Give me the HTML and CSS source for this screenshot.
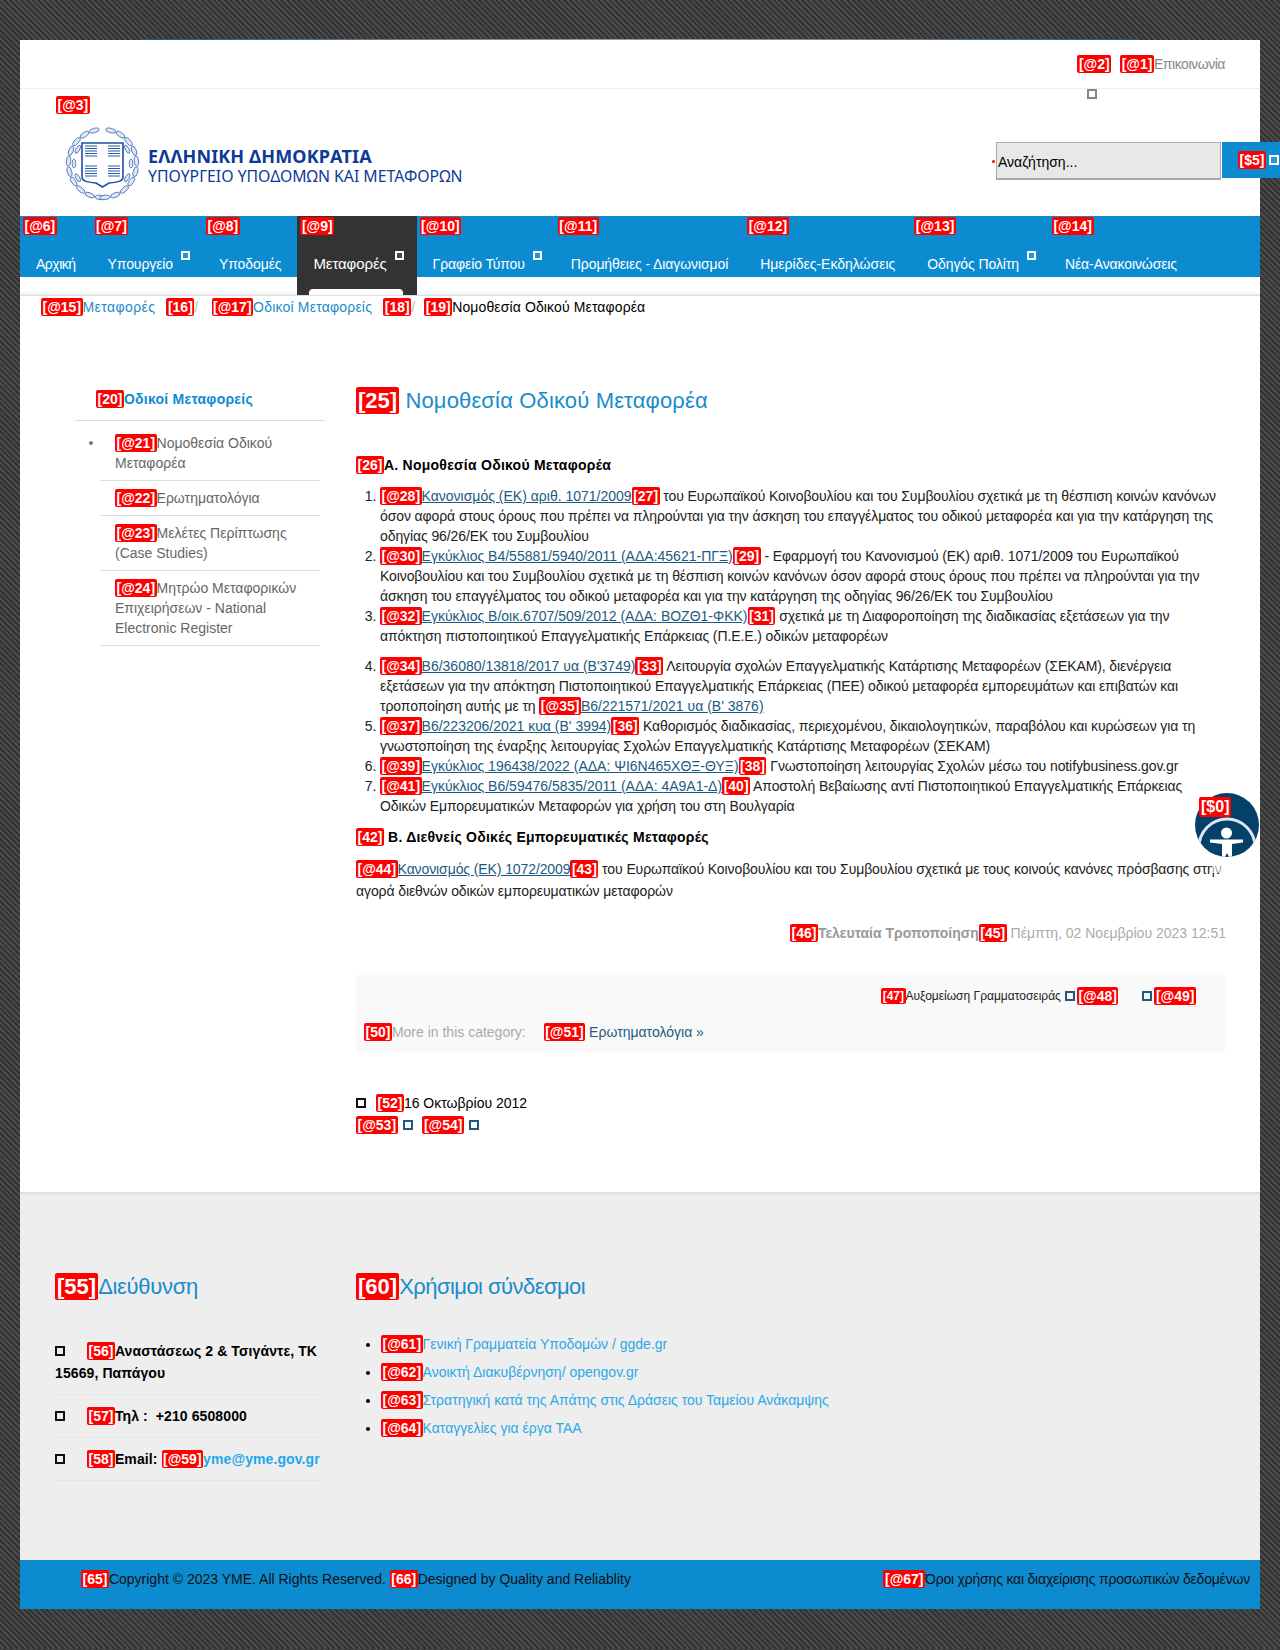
FILE: index.html
```html
<!DOCTYPE html>
<html lang="el">
<head>
    <meta charset="UTF-8">
    <title>Νομοθεσία Οδικού Μεταφορέα</title>
    <link rel="stylesheet" href="styles.css">
</head>
<body>
<div class="page">
    <!-- Top bar -->
    <div class="topbar">
        <b class="tag">[@2]</b>
        <span class="top-contact"><b class="tag">[@1]</b>Επικοινωνία</span>
    </div>

    <!-- Logo and search -->
    <div class="header">
        <i class="box box-gray header-box"></i>
        <div class="brand">
            <b class="tag brand-tag">[@3]</b>
            <div class="brand-row">
                <svg class="crest" viewBox="0 0 75 75">
                    <g fill="#dfe7f5" stroke="#2a5ba8" stroke-width="0.7">
                        <ellipse cx="37.500" cy="3.500" rx="5" ry="2.200" transform="rotate(-14 37.500 37.500)"/>
                        <ellipse cx="37.500" cy="3.500" rx="5" ry="2.200" transform="rotate(-32 37.500 37.500)"/>
                        <ellipse cx="37.500" cy="3.500" rx="5" ry="2.200" transform="rotate(-50 37.500 37.500)"/>
                        <ellipse cx="37.500" cy="3.500" rx="5" ry="2.200" transform="rotate(-68 37.500 37.500)"/>
                        <ellipse cx="37.500" cy="3.500" rx="5" ry="2.200" transform="rotate(-86 37.500 37.500)"/>
                        <ellipse cx="37.500" cy="3.500" rx="5" ry="2.200" transform="rotate(-104 37.500 37.500)"/>
                        <ellipse cx="37.500" cy="3.500" rx="5" ry="2.200" transform="rotate(-122 37.500 37.500)"/>
                        <ellipse cx="37.500" cy="3.500" rx="5" ry="2.200" transform="rotate(-140 37.500 37.500)"/>
                        <ellipse cx="37.500" cy="3.500" rx="5" ry="2.200" transform="rotate(-158 37.500 37.500)"/>
                        <ellipse cx="37.500" cy="3.500" rx="5" ry="2.200" transform="rotate(-176 37.500 37.500)"/>
                        <ellipse cx="37.500" cy="3.500" rx="5" ry="2.200" transform="rotate(14 37.500 37.500)"/>
                        <ellipse cx="37.500" cy="3.500" rx="5" ry="2.200" transform="rotate(32 37.500 37.500)"/>
                        <ellipse cx="37.500" cy="3.500" rx="5" ry="2.200" transform="rotate(50 37.500 37.500)"/>
                        <ellipse cx="37.500" cy="3.500" rx="5" ry="2.200" transform="rotate(68 37.500 37.500)"/>
                        <ellipse cx="37.500" cy="3.500" rx="5" ry="2.200" transform="rotate(86 37.500 37.500)"/>
                        <ellipse cx="37.500" cy="3.500" rx="5" ry="2.200" transform="rotate(104 37.500 37.500)"/>
                        <ellipse cx="37.500" cy="3.500" rx="5" ry="2.200" transform="rotate(122 37.500 37.500)"/>
                        <ellipse cx="37.500" cy="3.500" rx="5" ry="2.200" transform="rotate(140 37.500 37.500)"/>
                        <ellipse cx="37.500" cy="3.500" rx="5" ry="2.200" transform="rotate(158 37.500 37.500)"/>
                        <ellipse cx="37.500" cy="3.500" rx="5" ry="2.200" transform="rotate(176 37.500 37.500)"/>
                        <ellipse cx="37.500" cy="9" rx="4.500" ry="1.800" transform="rotate(-60 37.500 37.500)"/>
                        <ellipse cx="37.500" cy="9" rx="4.500" ry="1.800" transform="rotate(-90 37.500 37.500)"/>
                        <ellipse cx="37.500" cy="9" rx="4.500" ry="1.800" transform="rotate(-120 37.500 37.500)"/>
                        <ellipse cx="37.500" cy="9" rx="4.500" ry="1.800" transform="rotate(60 37.500 37.500)"/>
                        <ellipse cx="37.500" cy="9" rx="4.500" ry="1.800" transform="rotate(90 37.500 37.500)"/>
                        <ellipse cx="37.500" cy="9" rx="4.500" ry="1.800" transform="rotate(120 37.500 37.500)"/>
                    </g>
                    <path d="M17 17H58V51C58 55 54 56 44 57L37.500 61L31 57C21 56 17 55 17 51Z" fill="#fff" stroke="#1f4fa3" stroke-width="1.600"/>
                    <g stroke="#2a5ba8" stroke-width="1.200">
                        <path d="M20 20H32M20 22.500H32M20 25H32M20 27.500H32M20 30H32"/>
                        <path d="M43 20H55M43 22.500H55M43 25H55M43 27.500H55M43 30H55"/>
                        <path d="M20 40H32M20 42.500H32M20 45H32M20 47.500H32M20 50H32"/>
                        <path d="M43 40H55M43 42.500H55M43 45H55M43 47.500H55M43 50H55"/>
                    </g>
                </svg>
                <div class="brand-text">
                    <div class="brand-top">ΕΛΛΗΝΙΚΗ ΔΗΜΟΚΡΑΤΙΑ</div>
                    <div class="brand-sub">ΥΠΟΥΡΓΕΙΟ ΥΠΟΔΟΜΩΝ ΚΑΙ ΜΕΤΑΦΟΡΩΝ</div>
                </div>
            </div>
        </div>
        <form class="search">
            <span class="search-dot"></span>
            <div class="search-input">Αναζήτηση...</div>
            <div class="search-btn"><b class="tag">[$5]</b><i class="box box-white"></i></div>
        </form>
    </div>

    <!-- Main menu -->
    <ul class="nav">
        <li class="nav-home"><b class="tag">[@6]</b>Αρχική</li>
        <li><b class="tag">[@7]</b>Υπουργείο<i class="box box-white"></i></li>
        <li><b class="tag">[@8]</b>Υποδομές</li>
        <li class="active"><b class="tag">[@9]</b>Μεταφορές<i class="box box-white"></i></li>
        <li><b class="tag">[@10]</b>Γραφείο Τύπου<i class="box box-white"></i></li>
        <li><b class="tag">[@11]</b>Προμήθειες - Διαγωνισμοί</li>
        <li class="nav-wide"><b class="tag">[@12]</b>Ημερίδες-Εκδηλώσεις</li>
        <li><b class="tag">[@13]</b>Οδηγός Πολίτη<i class="box box-white"></i></li>
        <li><b class="tag">[@14]</b>Νέα-Ανακοινώσεις</li>
    </ul>

    <!-- Breadcrumb -->
    <div class="crumbs">
        <b class="tag">[@15]</b><a class="crumb-first">Μεταφορές</a>
        <b class="tag crumb-near">[16]</b><span class="slash">/</span>
        <b class="tag crumb-gap">[@17]</b><a>Οδικοί Μεταφορείς</a>
        <b class="tag crumb-near">[18]</b><span class="slash">/</span>
        <b class="tag crumb-last">[19]</b><span class="crumb-current">Νομοθεσία Οδικού Μεταφορέα</span>
    </div>

    <div class="content">
        <!-- Side menu -->
        <div class="sidebar">
            <div class="side-title"><b class="tag">[20]</b>Οδικοί Μεταφορείς</div>
            <ul class="side-list">
                <li class="side-current"><b class="tag">[@21]</b>Νομοθεσία Οδικού Μεταφορέα</li>
                <li><b class="tag">[@22]</b>Ερωτηματολόγια</li>
                <li><b class="tag">[@23]</b>Μελέτες Περίπτωσης (Case Studies)</li>
                <li><b class="tag">[@24]</b>Μητρώο Μεταφορικών Επιχειρήσεων - National Electronic Register</li>
            </ul>
        </div>

        <!-- Article -->
        <div class="article">
            <h1><b class="tag">[25]</b> Νομοθεσία Οδικού Μεταφορέα</h1>
            <h3 class="sec-a"><b class="tag">[26]</b>Α. Νομοθεσία Οδικού Μεταφορέα</h3>
            <ol class="laws">
                <li><b class="tag">[@28]</b><a>Κανονισμός (ΕΚ) αριθ. 1071/2009</a><b class="tag">[27]</b> του Ευρωπαϊκού Κοινοβουλίου και του Συμβουλίου σχετικά με τη θέσπιση κοινών κανόνων όσον αφορά στους όρους που πρέπει να πληρούνται για την άσκηση του επαγγέλματος του οδικού μεταφορέα και για την κατάργηση της οδηγίας 96/26/ΕΚ του Συμβουλίου</li>
                <li><b class="tag">[@30]</b><a>Εγκύκλιος Β4/55881/5940/2011 (ΑΔΑ:45621-ΠΓΞ)</a><b class="tag">[29]</b> - Εφαρμογή του Κανονισμού (ΕΚ) αριθ. 1071/2009 του Ευρωπαϊκού Κοινοβουλίου και του Συμβουλίου σχετικά με τη θέσπιση κοινών κανόνων όσον αφορά στους όρους που πρέπει να πληρούνται για την άσκηση του επαγγέλματος του οδικού μεταφορέα και για την κατάργηση της οδηγίας 96/26/ΕΚ του Συμβουλίου</li>
                <li class="law-gap"><b class="tag">[@32]</b><a>Εγκύκλιος Β/οικ.6707/509/2012 (ΑΔΑ: ΒΟΖΘ1-ΦΚΚ)</a><b class="tag">[31]</b> σχετικά με τη Διαφοροποίηση της διαδικασίας εξετάσεων για την απόκτηση πιστοποιητικού Επαγγελματικής Επάρκειας (Π.Ε.Ε.) οδικών μεταφορέων</li>
                <li><b class="tag">[@34]</b><a>Β6/36080/13818/2017 υα (Β'3749)</a><b class="tag">[33]</b> Λειτουργία σχολών Επαγγελματικής Κατάρτισης Μεταφορέων (ΣΕΚΑΜ), διενέργεια εξετάσεων για την απόκτηση Πιστοποιητικού Επαγγελματικής Επάρκειας (ΠΕΕ) οδικού μεταφορέα εμπορευμάτων και επιβατών και τροποποίηση αυτής με τη <b class="tag">[@35]</b><a>Β6/221571/2021 υα (Β' 3876)</a></li>
                <li><b class="tag">[@37]</b><a>Β6/223206/2021 κυα (Β' 3994)</a><b class="tag">[36]</b> Καθορισμός διαδικασίας, περιεχομένου, δικαιολογητικών, παραβόλου και κυρώσεων για τη γνωστοποίηση της έναρξης λειτουργίας Σχολών Επαγγελματικής Κατάρτισης Μεταφορέων (ΣΕΚΑΜ)</li>
                <li><b class="tag">[@39]</b><a>Εγκύκλιος 196438/2022 (ΑΔΑ: ΨΙ6Ν465ΧΘΞ-ΘΥΞ)</a><b class="tag">[38]</b> Γνωστοποίηση λειτουργίας Σχολών μέσω του notifybusiness.gov.gr</li>
                <li><b class="tag">[@41]</b><a>Εγκύκλιος Β6/59476/5835/2011 (ΑΔΑ: 4Α9Α1-Δ)</a><b class="tag">[40]</b> Αποστολή Βεβαίωσης αντί Πιστοποιητικού Επαγγελματικής Επάρκειας Οδικών Εμπορευματικών Μεταφορών για χρήση του στη Βουλγαρία</li>
            </ol>
            <h3 class="sec-b"><b class="tag">[42]</b> Β. Διεθνείς Οδικές Εμπορευματικές Μεταφορές</h3>
            <p class="intl"><b class="tag">[@44]</b><a>Κανονισμός (ΕΚ) 1072/2009</a><b class="tag">[43]</b> του Ευρωπαϊκού Κοινοβουλίου και του Συμβουλίου σχετικά με τους κοινούς κανόνες πρόσβασης στην αγορά διεθνών οδικών εμπορευματικών μεταφορών</p>
            <div class="modified"><b class="tag">[46]</b><strong>Τελευταία Τροποποίηση</strong><b class="tag">[45]</b> Πέμπτη, 02 Νοεμβρίου 2023 12:51</div>

            <div class="tools">
                <div class="font-row">
                    <b class="tag small-tag">[47]</b><span>Αυξομείωση Γραμματοσειράς</span>
                    <i class="box box-link font-box"></i><b class="tag">[@48]</b>
                    <i class="box box-link font-box font-box-2"></i><b class="tag">[@49]</b>
                </div>
                <div class="more-row">
                    <b class="tag">[50]</b><span class="more-label">More in this category:</span>
                    <b class="tag more-link-tag">[@51]</b> <a>Ερωτηματολόγια »</a>
                </div>
            </div>

            <div class="date-row"><i class="box box-black"></i><b class="tag">[52]</b>16 Οκτωβρίου 2012</div>
            <div class="share-row">
                <b class="tag">[@53]</b><i class="box box-link"></i>
                <b class="tag share-two">[@54]</b><i class="box box-link"></i>
            </div>
        </div>
    </div>

    <!-- Footer -->
    <div class="footer">
        <div class="foot-address">
            <h2><b class="tag">[55]</b>Διεύθυνση</h2>
            <ul class="address-list">
                <li><i class="box box-black"></i><b class="tag">[56]</b>Αναστάσεως 2 &amp; Τσιγάντε, ΤΚ 15669, Παπάγου</li>
                <li><i class="box box-black"></i><b class="tag">[57]</b>Τηλ :&nbsp; +210 6508000</li>
                <li><i class="box box-black"></i><b class="tag">[58]</b>Email: <b class="tag">[@59]</b><a>yme@yme.gov.gr</a></li>
            </ul>
        </div>
        <div class="foot-links">
            <h2><b class="tag">[60]</b>Χρήσιμοι σύνδεσμοι</h2>
            <ul class="link-list">
                <li><b class="tag">[@61]</b><a>Γενική Γραμματεία Υποδομών / ggde.gr</a></li>
                <li><b class="tag">[@62]</b><a>Ανοικτή Διακυβέρνηση/ opengov.gr</a></li>
                <li><b class="tag">[@63]</b><a>Στρατηγική κατά της Απάτης στις Δράσεις του Ταμείου Ανάκαμψης</a></li>
                <li><b class="tag">[@64]</b><a>Καταγγελίες για έργα ΤΑΑ</a></li>
            </ul>
        </div>
    </div>

    <div class="bottom">
        <div><b class="tag">[65]</b>Copyright © 2023 YME. All Rights Reserved. <b class="tag">[66]</b>Designed by Quality and Reliablity</div>
        <div class="bottom-right"><b class="tag">[@67]</b>Όροι χρήσης και διαχείρισης προσωπικών δεδομένων</div>
    </div>

    <!-- Accessibility widget -->
    <div class="a11y">
        <svg viewBox="0 0 64 64" width="64" height="64">
            <defs><clipPath id="disc"><circle cx="32" cy="32" r="32"/></clipPath></defs>
            <circle cx="32" cy="32" r="32" fill="#03416b"/>
            <g clip-path="url(#disc)" fill="#fff">
                <path d="M4 54A28 28 0 0 1 60 54" fill="none" stroke="#dfe7ee" stroke-width="3"/>
                <circle cx="31.500" cy="40" r="5.500"/>
                <path d="M15 46.500H48V49.500L37 51V64H34L32 60L30 64H27V51L15 49.500Z"/>
            </g>
        </svg>
        <b class="tag a11y-tag">[$0]</b>
    </div>
</div>
</body>
</html>
```

FILE: styles.css
```css
html, body {
    overflow-x: hidden;
}

body {
    margin: 0;
    font-family: "Liberation Sans", Arial, sans-serif;
    font-size: 14px;
    line-height: 20px;
    color: #222;
    background: repeating-linear-gradient(45deg, #333 0, #333 2px, #4a4a4a 2px, #4a4a4a 4px);
}

ul, ol, h1, h2, h3, p {
    margin: 0;
    padding: 0;
}

a {
    color: inherit;
}

.page {
    position: relative;
    width: 1240px;
    margin: 40px 20px;
    background: #fff;
}

.page::before {
    content: "";
    position: absolute;
    top: -1px;
    left: 120px;
    width: 1000px;
    height: 1px;
    background: linear-gradient(90deg, #1b5a8f, #999 45%, #999 55%, #1b5a8f);
}

.tag {
    padding: 1px 1.5px;
    border-radius: 2px;
    background: #f00;
    color: #fff;
    font-family: "Liberation Sans", Arial, sans-serif;
    font-weight: bold;
    font-size: 14px;
    letter-spacing: 0;
}

.box {
    display: inline-block;
    box-sizing: border-box;
    width: 10px;
    height: 10px;
    border: 2px solid #000;
}

.box-gray { border-color: #888; }
.box-white { border-color: #fff; background: rgba(255, 255, 255, 0.1); }
.box-black { border-color: #111; }
.box-link { border-color: #1c5a80; }

/* top bar */
.topbar {
    display: flex;
    justify-content: flex-end;
    align-items: flex-start;
    gap: 9px;
    box-sizing: border-box;
    height: 49px;
    padding: 14px 35px 0 0;
    border-bottom: 1px solid #eee;
}

.topbar > .tag {
    margin-top: 1px;
    line-height: 16px;
}

.top-contact {
    color: #888;
    letter-spacing: -0.45px;
}

/* header */
.header {
    position: relative;
    display: flex;
    justify-content: space-between;
    height: 127px;
}

.header-box {
    position: absolute;
    top: 0;
    left: 1067px;
}

.brand {
    padding: 6px 0 0 36px;
}

.brand-row {
    display: flex;
    align-items: center;
    gap: 8px;
    margin: 11px 0 0 9px;
}

.crest {
    width: 75px;
    height: 75px;
}

.brand-text {
    margin-top: 4px;
    font-family: "Noto Sans", sans-serif;
    color: #0d3a95;
    line-height: 20px;
}

.brand-top {
    font-weight: bold;
    font-size: 18px;
    letter-spacing: 0.15px;
}

.brand-sub {
    font-size: 15.8px;
}

.search {
    display: flex;
    align-items: flex-start;
    margin: 53px -20px 0 0;
    position: relative;
}

.search-dot {
    width: 3px;
    height: 3px;
    margin: 18px 1px 0 0;
    border-radius: 50%;
    background: #f00;
}

.search-input {
    box-sizing: border-box;
    width: 225px;
    height: 38px;
    padding: 9px 0 0 1px;
    border: 1px solid #aaa;
    border-bottom-width: 2px;
    background: #e8e8e8;
    color: #000;
    font-size: 14px;
}

.search-btn {
    display: flex;
    align-items: center;
    gap: 3px;
    box-sizing: border-box;
    width: 58px;
    height: 36px;
    margin-left: 1px;
    padding-left: 16px;
    background: #0d8bd0;
}

.search-btn .tag {
    line-height: 16px;
}

/* main menu */
.nav {
    display: flex;
    height: 61px;
    margin-bottom: 18px;
    list-style: none;
    background: #0d8bd0;
    color: #fff;
}

.nav li {
    position: relative;
    box-sizing: border-box;
    height: 61px;
    padding: 38px 16px 0;
    font-size: 14px;
    letter-spacing: -0.1px;
    white-space: nowrap;
}

.nav .nav-home {
    letter-spacing: -0.5px;
}

.nav .nav-wide {
    letter-spacing: 0;
}

.nav .tag {
    position: absolute;
    top: 1px;
    left: 3px;
    line-height: 16px;
}

.nav .box {
    width: 9px;
    height: 9px;
    margin: -3px -3px 0 8px;
    vertical-align: top;
}

.nav .active {
    height: 79px;
    font-size: 15px;
    background: #333;
}

.nav .active::after {
    content: "";
    position: absolute;
    left: 12px;
    bottom: 0;
    width: 94px;
    height: 6px;
    border-radius: 4px 4px 0 0;
    background: #fff;
}

/* breadcrumb */
.crumbs {
    height: 24px;
    padding: 1px 0 0 21px;
    border-top: 1px solid #ddd;
    box-shadow: 0 -2px 2px rgba(0, 0, 0, 0.06);
    color: #000;
    letter-spacing: 0.2px;
}

.crumbs a {
    color: #1a8ccc;
}

.crumbs .crumb-first {
    letter-spacing: 0.4px;
}

.crumb-gap {
    margin-left: 9px;
}

.crumb-near {
    margin-left: 7px;
}

.crumb-last {
    margin-left: 5px;
}

.crumb-current {
    letter-spacing: 0.12px;
}

.slash {
    color: #bbb;
}

/* two columns */
.content {
    display: flex;
    gap: 31px;
    padding: 0 34px 57px 55px;
}

.sidebar {
    width: 250px;
    flex-shrink: 0;
    margin-top: 68px;
    color: #666;
}

.side-title {
    height: 31px;
    padding-left: 21px;
    border-bottom: 1px solid #ddd;
    color: #0d8bd0;
    font-weight: bold;
    letter-spacing: 0.25px;
}

.side-list {
    margin-left: 25px;
    width: 220px;
    list-style: none;
}

.side-list li {
    padding: 7px 0 7px 15px;
    border-bottom: 1px solid #ddd;
}

.side-list .side-current {
    position: relative;
    padding-top: 12px;
}

.side-current::before {
    content: "";
    position: absolute;
    left: -11px;
    top: 20px;
    width: 4px;
    height: 4px;
    border-radius: 50%;
    background: #777;
}

.article {
    width: 870px;
}

.article h1 {
    margin-top: 66px;
    color: #1a8ccc;
    font-size: 22px;
    line-height: 28px;
    font-weight: normal;
    letter-spacing: 0.15px;
}

.article h1 .tag,
.footer h2 .tag {
    padding: 1px 2px;
    font-size: 22px;
}

.sec-a {
    margin-top: 40px;
    color: #000;
    font-size: 14px;
    line-height: 20px;
    letter-spacing: 0.25px;
}

.laws {
    margin-top: 11px;
    padding-left: 24px;
    letter-spacing: -0.1px;
}

.laws a,
.intl a {
    color: #1c5a80;
    text-decoration: underline;
}

.laws a {
    letter-spacing: 0;
}

.law-gap {
    margin-bottom: 10px;
}

.sec-b {
    margin-top: 11px;
    color: #000;
    font-size: 14px;
    line-height: 20px;
    letter-spacing: 0.25px;
}

.intl {
    margin-top: 11px;
    line-height: 22px;
    letter-spacing: -0.1px;
}

.modified {
    margin-top: 21px;
    text-align: right;
    color: #aaa;
}

.modified strong {
    color: #999;
}

.tools {
    margin-top: 32px;
    height: 77px;
    border-radius: 4px;
    background: #f9f9f9;
}

.font-row {
    display: flex;
    justify-content: flex-end;
    align-items: center;
    height: 38px;
    padding: 4px 30px 0 0;
    box-sizing: border-box;
    color: #222;
    font-size: 12px;
}

.font-row .tag {
    line-height: 16px;
}

.font-row .small-tag {
    font-size: 12px;
    line-height: 14px;
}

.font-box {
    margin: 0 2px 0 4px;
}

.font-box-2 {
    margin-left: 24px;
}

.more-row {
    padding: 9px 0 0 8px;
    color: #1c5a80;
}

.more-label {
    color: #aaa;
}

.more-link-tag {
    margin-left: 14px;
}

.date-row {
    margin-top: 41px;
    color: #000;
}

.date-row .box {
    margin-right: 10px;
}

.share-row {
    margin-top: 2px;
}

.share-row .box {
    margin-left: 5px;
}

.share-two {
    margin-left: 6px;
}

/* footer */
.footer {
    display: flex;
    gap: 31px;
    padding: 81px 0 79px 35px;
    background: #eee;
    box-shadow: inset 0 3px 2px -1px #ddd;
}

.foot-address {
    width: 270px;
}

.footer h2 {
    color: #1a8ccc;
    font-size: 22px;
    line-height: 28px;
    font-weight: normal;
    letter-spacing: -0.3px;
}

.foot-links h2 {
    letter-spacing: -0.55px;
}

.address-list {
    margin-top: 29px;
    list-style: none;
    color: #000;
    font-weight: bold;
    letter-spacing: 0.1px;
}

.address-list li {
    padding: 10px 0;
    line-height: 22px;
    border-bottom: 1px solid #e6e6e6;
}

.address-list .box {
    margin-right: 22px;
}

.address-list a {
    color: #1ea7ec;
}

.link-list {
    margin-top: 29px;
    padding-left: 25px;
    color: #000;
}

.link-list li {
    height: 28px;
    line-height: 28px;
}

.link-list a {
    color: #2aa9e8;
}

.bottom {
    display: flex;
    justify-content: space-between;
    height: 49px;
    box-sizing: border-box;
    padding: 9px 10px 0 61px;
    background: #0d8bd0;
    color: #111;
}

.bottom-right {
    letter-spacing: -0.2px;
}

/* accessibility button */
.a11y {
    position: absolute;
    top: 753px;
    left: 1175px;
    width: 64px;
    height: 64px;
}

.a11y::after {
    content: "";
    position: absolute;
    top: 68px;
    left: 17px;
    width: 16px;
    height: 12px;
    background: rgba(255, 255, 255, 0.6);
}

.a11y svg {
    display: block;
}

.a11y-tag {
    position: absolute;
    top: 4px;
    left: 4px;
    padding: 1px 2px;
    font-size: 16px;
    line-height: 18px;
}
```
